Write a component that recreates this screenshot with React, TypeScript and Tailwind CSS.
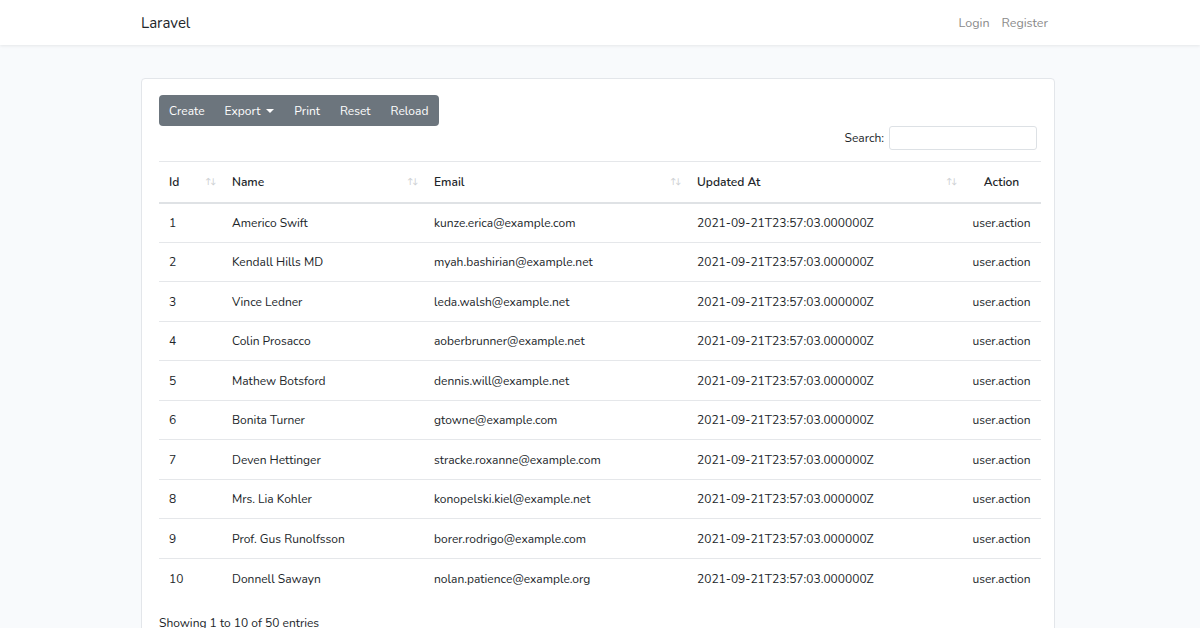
import React from "react";

const rows = [
  ["1", "Americo Swift", "kunze.erica@example.com"],
  ["2", "Kendall Hills MD", "myah.bashirian@example.net"],
  ["3", "Vince Ledner", "leda.walsh@example.net"],
  ["4", "Colin Prosacco", "aoberbrunner@example.net"],
  ["5", "Mathew Botsford", "dennis.will@example.net"],
  ["6", "Bonita Turner", "gtowne@example.com"],
  ["7", "Deven Hettinger", "stracke.roxanne@example.com"],
  ["8", "Mrs. Lia Kohler", "konopelski.kiel@example.net"],
  ["9", "Prof. Gus Runolfsson", "borer.rodrigo@example.com"],
  ["10", "Donnell Sawayn", "nolan.patience@example.org"],
];

function Sort() {
  return <span className="absolute right-[6px] top-1/2 -translate-y-1/2 text-[8px] tracking-[-1px] text-[#cdd0d3]">↑↓</span>;
}

export default function App() {
  return (
    <div className="min-h-[628px] bg-[#f8fafc] text-[#212529] text-[12px]" style={{ fontFamily: "Nunito, Lato, 'Noto Sans', sans-serif" }}>
      <nav className="h-[45px] bg-white shadow-[0_1px_3px_rgba(0,0,0,0.08)] flex items-center">
        <div className="ml-[141px] w-[907px] flex items-center justify-between pt-[1px]">
          <span className="text-[15px] text-[#212529]">Laravel</span>
          <div className="flex gap-[12px] text-[12.5px] text-[#8a8a8a]">
            <span>Login</span>
            <span>Register</span>
          </div>
        </div>
      </nav>
      <div className="ml-[141px] w-[914px] mt-[33px] bg-white border border-[#e3e6ea] rounded-[4px] px-[17px] pt-[16px] pb-[10px]">
        <div className="flex">
          <div className="flex h-[31px] items-center rounded-[4px] bg-[#6c757d] text-white text-[12px] pt-[1px]">
            <span className="pl-[10px] pr-[10px]">Create</span>
            <span className="px-[10px] flex items-center gap-[6px]">Export<span className="inline-block w-0 h-0 border-l-[4px] border-r-[4px] border-t-[4px] border-l-transparent border-r-transparent border-t-white"></span></span>
            <span className="px-[10px]">Print</span>
            <span className="px-[10px]">Reset</span>
            <span className="pl-[10px] pr-[11px]">Reload</span>
          </div>
        </div>
        <div className="flex justify-end items-center gap-[5px] mt-[-1px] pt-[1px]">
          <span className="text-[12px]">Search:</span>
          <div className="w-[148px] h-[24px] border border-[#dde1e5] rounded-[3px] bg-white"></div>
        </div>
        <table className="w-[882px] mt-[11px] border-collapse table-fixed">
          <colgroup>
            <col className="w-[62px]" />
            <col className="w-[202px]" />
            <col className="w-[263px]" />
            <col className="w-[276px]" />
            <col className="w-[79px]" />
          </colgroup>
          <thead>
            <tr className="h-[41px] border-t border-[#e5e7ea] border-b-2 border-b-[#dfe2e5]">
              <th className="relative text-left font-semibold pl-[10px]">Id<Sort /></th>
              <th className="relative text-left font-semibold pl-[11px]">Name<Sort /></th>
              <th className="relative text-left font-semibold pl-[11px]">Email<Sort /></th>
              <th className="relative text-left font-semibold pl-[11px]">Updated At<Sort /></th>
              <th className="text-center font-semibold">Action</th>
            </tr>
          </thead>
          <tbody>
            {rows.map((r, i) => (
              <tr key={r[0]} className={"h-[39.5px] " + (i > 0 ? "border-t border-[#e5e7ea]" : "")}>
                <td className="pl-[10px] pt-[1px]">{r[0]}</td>
                <td className="pl-[11px] pt-[1px]">{r[1]}</td>
                <td className="pl-[11px] pt-[1px]">{r[2]}</td>
                <td className="pl-[11px] pt-[1px]">2021-09-21T23:57:03.000000Z</td>
                <td className="text-center pt-[1px]">user.action</td>
              </tr>
            ))}
          </tbody>
        </table>
        <div className="mt-[16px] text-[12px]">Showing 1 to 10 of 50 entries</div>
      </div>
    </div>
  );
}
